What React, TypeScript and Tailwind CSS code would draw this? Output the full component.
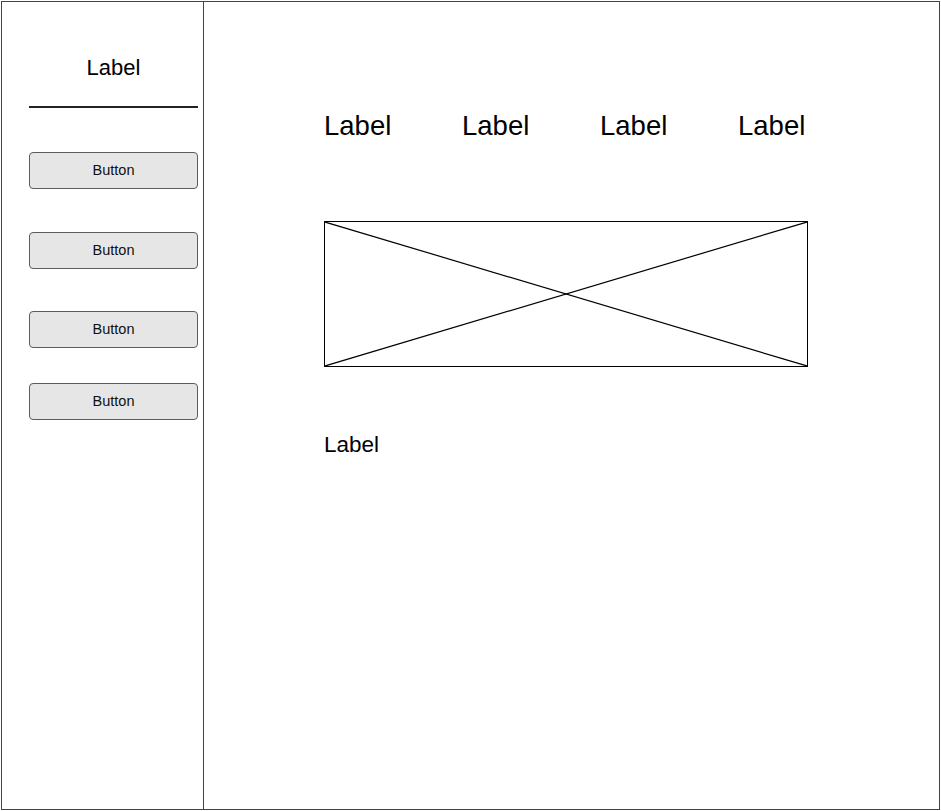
const font = { fontFamily: '"Liberation Sans", Arial, sans-serif' }

function SideButton({ className }: { className?: string }) {
  return (
    <button
      className={
        'flex h-[37px] w-[169px] items-center justify-center rounded-[4px] border border-[#5c5c5c] bg-[#e6e6e6] text-[14.5px] text-[#111] ' +
        (className ?? '')
      }
    >
      Button
    </button>
  )
}

export default function App() {
  return (
    <div className="h-[811px] w-[941px] bg-white p-[1px]" style={font}>
      <div className="flex h-[809px] w-[939px] border border-[#444]">
        {/* Sidebar */}
        <div className="flex w-[202px] shrink-0 flex-col border-r border-[#444] pl-[27px]">
          <div className="mt-[53px] w-[169px] text-center text-[22px] leading-[26px] text-black">Label</div>
          <div className="mt-[25px] h-[2px] w-[169px] bg-[#222]" />
          <SideButton className="mt-[44px]" />
          <SideButton className="mt-[43px]" />
          <SideButton className="mt-[42px]" />
          <SideButton className="mt-[35px]" />
        </div>

        {/* Main */}
        <div className="flex flex-1 flex-col pl-[120px] pt-[108px]">
          <div className="grid grid-cols-[138px_138px_138px_138px] text-[27.5px] leading-[32px] text-black">
            <span>Label</span>
            <span>Label</span>
            <span>Label</span>
            <span>Label</span>
          </div>
          <div className="mt-[79px] h-[146px] w-[484px] border border-black">
            <svg width="482" height="144" viewBox="0 0 482 144" className="block">
              <line x1="0" y1="0" x2="482" y2="144" stroke="black" strokeWidth="1.2" />
              <line x1="0" y1="144" x2="482" y2="0" stroke="black" strokeWidth="1.2" />
            </svg>
          </div>
          <div className="mt-[65px] text-[22.5px] leading-[26px] text-black">Label</div>
        </div>
      </div>
    </div>
  )
}
